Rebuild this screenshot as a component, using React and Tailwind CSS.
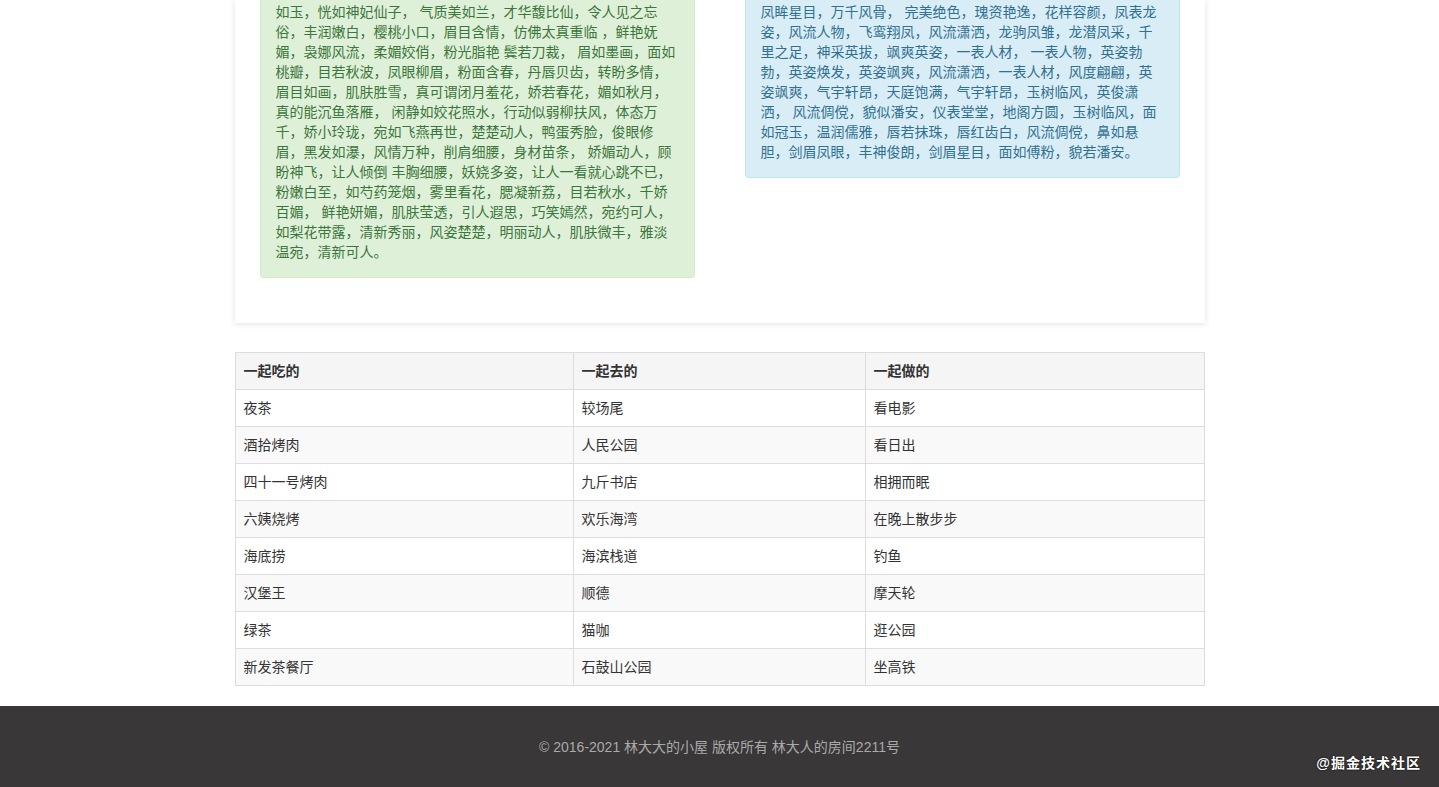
const greenLines = [
  '如玉，恍如神妃仙子， 气质美如兰，才华馥比仙，令人见之忘',
  '俗，丰润嫩白，樱桃小口，眉目含情，仿佛太真重临 ，鲜艳妩',
  '媚，袅娜风流，柔媚姣俏，粉光脂艳 鬓若刀裁， 眉如墨画，面如',
  '桃瓣，目若秋波，凤眼柳眉，粉面含春，丹唇贝齿，转盼多情，',
  '眉目如画，肌肤胜雪，真可谓闭月羞花，娇若春花，媚如秋月，',
  '真的能沉鱼落雁， 闲静如姣花照水，行动似弱柳扶风，体态万',
  '千，娇小玲珑，宛如飞燕再世，楚楚动人，鸭蛋秀脸，俊眼修',
  '眉，黑发如瀑，风情万种，削肩细腰，身材苗条， 娇媚动人，顾',
  '盼神飞，让人倾倒 丰胸细腰，妖娆多姿，让人一看就心跳不已，',
  '粉嫩白至，如芍药笼烟，雾里看花，腮凝新荔，目若秋水，千娇',
  '百媚， 鲜艳妍媚，肌肤莹透，引人遐思，巧笑嫣然，宛约可人，',
  '如梨花带露，清新秀丽，风姿楚楚，明丽动人，肌肤微丰，雅淡',
  '温宛，清新可人。',
];

const blueLines = [
  '凤眸星目，万千风骨， 完美绝色，瑰资艳逸，花样容颜，凤表龙',
  '姿，风流人物，飞鸾翔凤，风流潇洒，龙驹凤雏，龙潜凤采，千',
  '里之足，神采英拔，飒爽英姿，一表人材， 一表人物，英姿勃',
  '勃，英姿焕发，英姿飒爽，风流潇洒，一表人材，风度翩翩，英',
  '姿飒爽，气宇轩昂，天庭饱满，气宇轩昂，玉树临风，英俊潇',
  '洒， 风流倜傥，貌似潘安，仪表堂堂，地阁方圆，玉树临风，面',
  '如冠玉，温润儒雅，唇若抹珠，唇红齿白，风流倜傥，鼻如悬',
  '胆，剑眉凤眼，丰神俊朗，剑眉星目，面如傅粉，貌若潘安。',
];

const rows = [
  ['夜茶', '较场尾', '看电影'],
  ['酒拾烤肉', '人民公园', '看日出'],
  ['四十一号烤肉', '九斤书店', '相拥而眠'],
  ['六姨烧烤', '欢乐海湾', '在晚上散步步'],
  ['海底捞', '海滨栈道', '钓鱼'],
  ['汉堡王', '顺德', '摩天轮'],
  ['绿茶', '猫咖', '逛公园'],
  ['新发茶餐厅', '石鼓山公园', '坐高铁'],
];

const font = { fontFamily: '"Liberation Sans", "Noto Sans CJK SC", sans-serif' };

export default function App() {
  return (
    <div className="h-[787px] overflow-hidden bg-white text-[14px] leading-[20px] text-[#333]" style={font}>
      <div className="mx-auto w-[970px] bg-white shadow-[0_1px_6px_rgba(0,0,0,0.12)] px-[25px] pb-[45px]">
        <div className="flex gap-[50px] items-start">
          <div className="w-[435px] bg-[#dff0d8] text-[#3c763d] border border-t-0 border-[#d6e9c6] rounded-b-[4px] px-[15px] pt-[2px] pb-[15px]">
            {greenLines.map((l, i) => <div key={i} className="whitespace-nowrap">{l}</div>)}
          </div>
          <div className="w-[435px] bg-[#d9edf7] text-[#31708f] border border-t-0 border-[#bce8f1] rounded-b-[4px] px-[15px] pt-[2px] pb-[15px]">
            {blueLines.map((l, i) => <div key={i} className="whitespace-nowrap">{l}</div>)}
          </div>
        </div>
      </div>

      <table className="mx-auto mt-[29px] w-[970px] border-collapse border border-[#ddd]">
        <thead>
          <tr className="bg-[#f5f5f5]">
            <th className="w-[338px] h-[37px] border border-[#ddd] px-[8px] text-left font-bold">一起吃的</th>
            <th className="w-[292px] h-[37px] border border-[#ddd] px-[8px] text-left font-bold">一起去的</th>
            <th className="h-[37px] border border-[#ddd] px-[8px] text-left font-bold">一起做的</th>
          </tr>
        </thead>
        <tbody>
          {rows.map((r, i) => (
            <tr key={i} className={i % 2 === 1 ? 'bg-[#f9f9f9]' : 'bg-white'}>
              {r.map((c, j) => (
                <td key={j} className="h-[37px] border border-[#ddd] px-[8px]">{c}</td>
              ))}
            </tr>
          ))}
        </tbody>
      </table>

      <footer className="relative mt-[20px] h-[81px] bg-[#393737] flex items-center justify-center text-[#aaa]">
        © 2016-2021 林大大的小屋 版权所有 林大人的房间2211号
        <span className="absolute right-[18px] bottom-[14px] text-white font-bold text-[14px] tracking-[1px] [text-shadow:0_0_2px_#000]">@掘金技术社区</span>
      </footer>
    </div>
  );
}
